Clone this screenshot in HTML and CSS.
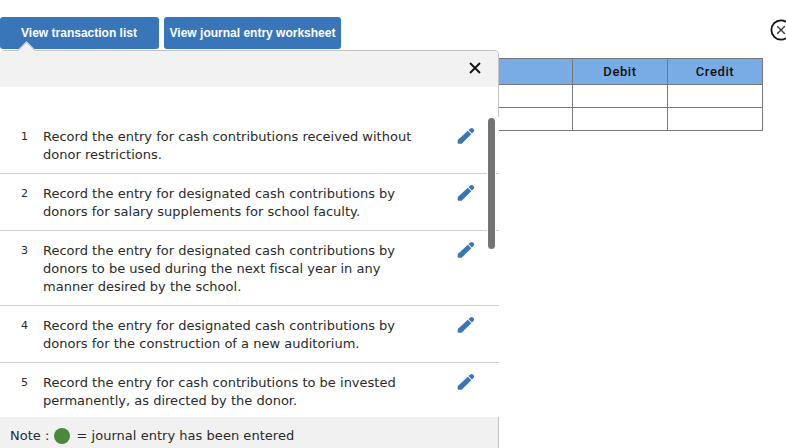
FILE: index.html
```html
<!DOCTYPE html>
<html lang="en">
<head>
  <meta charset="utf-8">
  <title>Journal entry worksheet</title>
  <link rel="stylesheet" href="styles.css">
</head>
<body>
  <svg width="0" height="0" class="sprite">
    <symbol id="pencil" viewBox="0 0 18 18">
      <path d="M.8 12.9 10.8 3.7 14.3 7.2 4.6 16.8H1.6Q.6 16.8.6 15.8Z"/>
      <path d="M11.5 3.1 13.4 1.4Q14.6.4 15.9 1.5L16.7 2.3Q17.7 3.4 16.7 4.8L14.9 6.6Z"/>
    </symbol>
  </svg>

  <div class="toolbar">
    <button class="btn btn-list">View transaction list</button>
    <button class="btn btn-sheet">View journal entry worksheet</button>
    <svg class="exit" width="22" height="22" viewBox="0 0 22 22">
      <circle cx="11" cy="11" r="9.6"/>
      <path d="M7.2 7.2 14.8 14.8M14.8 7.2 7.2 14.8"/>
    </svg>
  </div>

  <table class="worksheet">
    <thead>
      <tr><th class="account"></th><th>Debit</th><th>Credit</th></tr>
    </thead>
    <tbody>
      <tr><td></td><td></td><td></td></tr>
      <tr><td></td><td></td><td></td></tr>
    </tbody>
  </table>

  <div class="panel">
    <div class="panel-header">
      <svg class="close" width="12" height="12" viewBox="0 0 12 12"><path d="M1 1 11 11M11 1 1 11"/></svg>
    </div>
    <div class="panel-body">
      <ul class="entries">
        <li>
          <span class="num">1</span>
          <p>Record the entry for cash contributions received without<br>donor restrictions.</p>
          <svg class="edit"><use href="#pencil"/></svg>
        </li>
        <li>
          <span class="num">2</span>
          <p>Record the entry for designated cash contributions by<br>donors for salary supplements for school faculty.</p>
          <svg class="edit"><use href="#pencil"/></svg>
        </li>
        <li>
          <span class="num">3</span>
          <p>Record the entry for designated cash contributions by<br>donors to be used during the next fiscal year in any<br>manner desired by the school.</p>
          <svg class="edit"><use href="#pencil"/></svg>
        </li>
        <li>
          <span class="num">4</span>
          <p>Record the entry for designated cash contributions by<br>donors for the construction of a new auditorium.</p>
          <svg class="edit"><use href="#pencil"/></svg>
        </li>
        <li>
          <span class="num">5</span>
          <p>Record the entry for cash contributions to be invested<br>permanently, as directed by the donor.</p>
          <svg class="edit"><use href="#pencil"/></svg>
        </li>
      </ul>
      <div class="scrollbar"></div>
    </div>
    <div class="panel-footer">
      <span>Note :</span><span class="dot"></span><span class="legend">= journal entry has been entered</span>
    </div>
  </div>
</body>
</html>
```
FILE: styles.css
```css
* {
  box-sizing: border-box;
}
body {
  margin: 0;
  height: 448px;
  overflow: hidden;
  position: relative;
  background: #fff;
  color: #2a2a2a;
  font-family: Verdana, "DejaVu Sans", sans-serif;
  font-size: 13px;
}
.sprite {
  position: absolute;
}
.toolbar {
  display: flex;
  width: 792px;
  padding-top: 17px;
}
.btn {
  height: 32px;
  padding: 0;
  border: 0;
  border-radius: 3px;
  background: #3975b9;
  color: #fff;
  font: bold 12px Arial, "Liberation Sans", sans-serif;
  white-space: nowrap;
}
.btn-list {
  width: 159px;
  margin-right: 5px;
  padding-right: 1px;
}
.btn-sheet {
  width: 177px;
}
.exit {
  margin-left: auto;
  margin-top: 2px;
  fill: none;
  stroke: #111;
  stroke-width: 1.8;
}
.exit path {
  stroke: #333;
  stroke-width: 1.3;
}

/* journal worksheet */
.worksheet {
  width: 763px;
  margin-top: 9px;
  border-collapse: collapse;
  table-layout: fixed;
}
.worksheet th,
.worksheet td {
  width: 95px;
  height: 23px;
  padding: 0;
  border: 1px solid #777;
}
.worksheet th {
  height: 26px;
  padding-bottom: 1px;
  background: #79ace5;
  color: #111;
  font: 500 13px Roboto, Arial, sans-serif;
  letter-spacing: .6px;
}
.worksheet .account {
  width: auto;
}

/* transaction list popup */
.panel {
  position: absolute;
  top: 50px;
  left: 0;
  width: 499px;
  height: 398px;
  display: flex;
  flex-direction: column;
  border: 1px solid #c4c4c4;
  border-width: 1px 1px 0 0;
  border-radius: 5px 5px 0 0;
  background: #fff;
}
.panel-header {
  height: 36px;
  display: flex;
  align-items: center;
  justify-content: flex-end;
  padding: 0 17px 2px 0;
  border-radius: 4px 4px 0 0;
  background: #f2f2f2;
}
.panel-header::before {
  content: "";
  position: absolute;
  top: -7px;
  left: 20px;
  width: 12px;
  height: 12px;
  border: 1px solid #c4c4c4;
  border-width: 1px 0 0 1px;
  background: #f2f2f2;
  transform: rotate(45deg);
}
.close {
  fill: none;
  stroke: #111;
  stroke-width: 1.8;
}
.panel-body {
  position: relative;
  height: 330px;
  margin-right: -1px;
  padding-top: 30px;
}
.entries {
  height: 300px;
  margin: 0;
  padding: 0;
  overflow: hidden;
  list-style: none;
  background: #fff;
}
.entries li {
  display: flex;
  padding: 11px 24px 9px 21px;
  border-bottom: 1px solid #d0d0d0;
  line-height: 18px;
}
.entries li:last-child {
  border-bottom: 0;
}
.entries p {
  flex: 1;
  margin: 0;
  letter-spacing: .01px;
  white-space: nowrap;
}
.num {
  width: 22px;
  font-size: 11px;
}
.edit {
  width: 18px;
  height: 18px;
  margin-top: -1px;
  fill: #3975b9;
}
.scrollbar {
  position: absolute;
  top: 31px;
  right: 3px;
  width: 9px;
  height: 131px;
  border: solid #fff;
  border-width: 0 1px;
  border-radius: 4px;
  background: #757373;
}
.panel-footer {
  flex: 1;
  display: flex;
  align-items: center;
  padding: 6px 0 0 10px;
  background: #f1f1f1;
  letter-spacing: .03px;
}
.dot {
  width: 16px;
  height: 16px;
  margin: 0 6px 0 5px;
  border-radius: 50%;
  background: #4c873f;
}
```
